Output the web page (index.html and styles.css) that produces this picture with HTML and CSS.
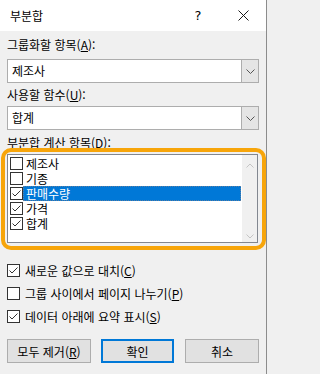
FILE: index.html
```html
<!DOCTYPE html>
<html lang="ko">
<head>
<meta charset="utf-8">
<link rel="stylesheet" href="styles.css">
</head>
<body>
<div class="dialog">
  <div class="titlebar">
    <span class="title">부분합</span>
    <span class="cap-btn help">?</span>
    <span class="cap-btn close"><svg width="11" height="11" viewBox="0 0 11 11"><path d="M0.5 0.5 L10.5 10.5 M10.5 0.5 L0.5 10.5" stroke="#1a1a1a" stroke-width="1" fill="none"/></svg></span>
  </div>
  <div class="content">
    <div class="label l1">그룹화할 항목(<u>A</u>):</div>
    <div class="combo c1">
      <span class="combo-text">제조사</span>
      <span class="combo-btn"><svg width="9" height="5" viewBox="0 0 9 5"><path d="M0.5 0.5 L4.5 4.5 L8.5 0.5" stroke="#555" stroke-width="1" fill="none"/></svg></span>
    </div>
    <div class="label l2">사용할 함수(<u>U</u>):</div>
    <div class="combo c2">
      <span class="combo-text">합계</span>
      <span class="combo-btn"><svg width="9" height="5" viewBox="0 0 9 5"><path d="M0.5 0.5 L4.5 4.5 L8.5 0.5" stroke="#555" stroke-width="1" fill="none"/></svg></span>
    </div>
    <div class="label l3">부분합 계산 항목(<u>D</u>):</div>
    <div class="listbox">
      <div class="items">
        <div class="item"><span class="cb"></span><span class="item-text">제조사</span></div>
        <div class="item"><span class="cb"></span><span class="item-text">기종</span></div>
        <div class="item"><span class="cb checked"><svg width="11" height="11" viewBox="0 0 11 11"><path d="M1.5 5.5 L4 8 L9.5 2.5" stroke="#333" stroke-width="1" fill="none"/></svg></span><span class="item-text selected">판매수량</span></div>
        <div class="item"><span class="cb checked"><svg width="11" height="11" viewBox="0 0 11 11"><path d="M1.5 5.5 L4 8 L9.5 2.5" stroke="#333" stroke-width="1" fill="none"/></svg></span><span class="item-text">가격</span></div>
        <div class="item"><span class="cb checked"><svg width="11" height="11" viewBox="0 0 11 11"><path d="M1.5 5.5 L4 8 L9.5 2.5" stroke="#333" stroke-width="1" fill="none"/></svg></span><span class="item-text">합계</span></div>
      </div>
      <div class="scrollbar">
        <svg width="8" height="5" viewBox="0 0 8 5"><path d="M0.5 4.5 L4 1 L7.5 4.5" stroke="#c4c4c4" stroke-width="1" fill="none"/></svg>
        <svg width="8" height="5" viewBox="0 0 8 5"><path d="M0.5 0.5 L4 4 L7.5 0.5" stroke="#c4c4c4" stroke-width="1" fill="none"/></svg>
      </div>
    </div>
    <div class="options">
      <div class="opt"><span class="cb checked"><svg width="11" height="11" viewBox="0 0 11 11"><path d="M1.5 5.5 L4 8 L9.5 2.5" stroke="#333" stroke-width="1" fill="none"/></svg></span><span class="opt-text">새로운 값으로 대치(<u>C</u>)</span></div>
      <div class="opt"><span class="cb"></span><span class="opt-text">그룹 사이에서 페이지 나누기(<u>P</u>)</span></div>
      <div class="opt"><span class="cb checked"><svg width="11" height="11" viewBox="0 0 11 11"><path d="M1.5 5.5 L4 8 L9.5 2.5" stroke="#333" stroke-width="1" fill="none"/></svg></span><span class="opt-text">데이터 아래에 요약 표시(<u>S</u>)</span></div>
    </div>
    <div class="buttons">
      <span class="btn b-remove">모두 제거(<u>R</u>)</span>
      <span class="btn b-ok">확인</span>
      <span class="btn b-cancel">취소</span>
    </div>
  </div>
</div>
</body>
</html>
```

FILE: styles.css
```css
html, body {
  margin: 0;
  padding: 0;
}
body {
  width: 267px;
  height: 374px;
  overflow: hidden;
  background: #f0f0f0;
  font-family: "Noto Sans CJK KR", "Noto Sans", sans-serif;
  font-size: 12px;
  color: #000;
}
.dialog {
  width: 266px;
  height: 374px;
  border-right: 1px solid #8c8c8c;
  background: #f0f0f0;
}
.titlebar {
  height: 31px;
  background: #fff;
  display: flex;
  align-items: center;
}
.title {
  flex: 1;
  padding-left: 10px;
  line-height: 16px;
}
.cap-btn {
  height: 31px;
  display: flex;
  align-items: center;
  justify-content: center;
}
.help {
  width: 46px;
  font-family: "DejaVu Sans", sans-serif;
  font-size: 13px;
}
.close {
  width: 45px;
}
.content {
  padding: 0 7px;
}
.label {
  height: 16px;
  line-height: 16px;
  white-space: nowrap;
}
.l1 { margin-top: 6px; }
.l2 { margin-top: 4px; }
.l3 { margin-top: 5px; }
.combo {
  height: 24px;
  box-sizing: border-box;
  border: 1px solid #adadad;
  background: #fff;
  display: flex;
}
.c1 { margin-top: 6px; }
.c2 { margin-top: 3px; }
.combo-text {
  flex: 1;
  padding-left: 4px;
  line-height: 22px;
}
.combo-btn {
  width: 16px;
  border-left: 1px solid #adadad;
  background: #e5e5e5;
  display: flex;
  align-items: center;
  justify-content: center;
}
.listbox {
  position: relative;
  margin-top: 3px;
  margin-right: 1px;
  height: 89px;
  box-sizing: border-box;
  border: 1px solid #828790;
  background: #fff;
  display: flex;
}
.listbox::after {
  content: "";
  position: absolute;
  top: -7px;
  left: -7px;
  right: -9px;
  bottom: -8px;
  border: 4px solid #f7a50a;
  border-radius: 10px;
  pointer-events: none;
}
.items {
  flex: 1;
  padding-top: 1px;
}
.item {
  height: 15px;
  display: flex;
  align-items: center;
}
.item .cb {
  margin-left: 2px;
}
.cb {
  width: 13px;
  height: 13px;
  box-sizing: border-box;
  border: 1px solid #333;
  background: #fff;
  flex: none;
  display: flex;
}
.item-text {
  flex: 1;
  height: 15px;
  line-height: 15px;
  padding-left: 3px;
  margin-right: 1px;
}
.item-text.selected {
  background: #0078d7;
  color: #fff;
  outline: 1px dotted #5d7ea0;
  outline-offset: -1px;
}
.scrollbar {
  width: 15px;
  background: #f0f0f0;
  display: flex;
  flex-direction: column;
  align-items: center;
  justify-content: space-between;
  padding: 8px 0 3px;
  box-sizing: border-box;
}
.options {
  margin-top: 16px;
}
.opt {
  height: 23px;
  display: flex;
  align-items: center;
}
.opt-text {
  margin-left: 5px;
  line-height: 16px;
  white-space: nowrap;
}
.buttons {
  margin-top: 11px;
  display: flex;
  gap: 10px;
}
.btn {
  height: 24px;
  box-sizing: border-box;
  border: 1px solid #adadad;
  background: #e1e1e1;
  display: flex;
  align-items: center;
  justify-content: center;
  white-space: nowrap;
}
.b-remove { width: 84px; }
.b-ok {
  width: 73px;
  border: 2px solid #0078d7;
}
.b-cancel {
  width: 74px;
  margin-left: 1px;
}
```
